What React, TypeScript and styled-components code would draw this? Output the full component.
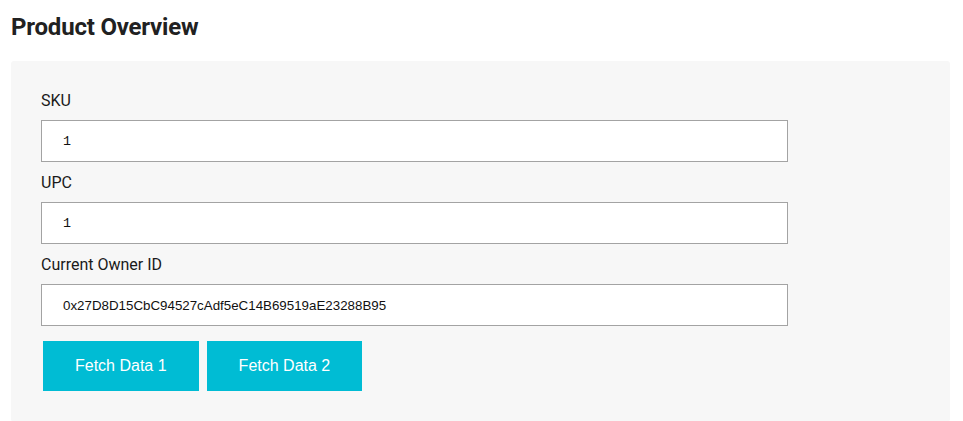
import React from "react"
import styled, { createGlobalStyle } from "styled-components"

const GlobalStyle = createGlobalStyle`
  html, body {
    margin: 0;
    padding: 0;
    background: #ffffff;
  }
  body {
    font-family: Roboto, "Liberation Sans", Arial, sans-serif;
    color: #212121;
  }
`

const Page = styled.div`
  padding: 0 13px 0 11px;
`

const Title = styled.h2`
  margin: 0;
  padding-top: 13px;
  height: 50px;
  box-sizing: border-box;
  font-family: Roboto, sans-serif;
  font-size: 24px;
  font-weight: 700;
  line-height: 28px;
  color: #212121;
  letter-spacing: -0.2px;
`

const Panel = styled.section`
  margin-top: 11px;
  background: #f7f7f7;
  border-radius: 3px;
  padding: 30px 30px 31px 30px;
  min-height: 300px;
`

const Field = styled.div`
  display: flex;
  flex-direction: column;
  align-items: flex-start;
  margin-bottom: 11px;

  &:last-of-type {
    margin-bottom: 0;
  }
`

const Label = styled.label`
  font-family: Roboto, sans-serif;
  font-size: 16px;
  line-height: 19px;
  color: #1a1a1a;
  margin-bottom: 10px;
`

const Input = styled.input<{ $mono?: boolean }>`
  box-sizing: border-box;
  width: 747px;
  height: 42px;
  border: 1px solid #a3a3a3;
  border-radius: 0;
  background: #ffffff;
  padding: 0 20px 0 21px;
  font-family: ${({ $mono }) => ($mono ? `"Liberation Mono", monospace` : `"Liberation Sans", Arial, sans-serif`)};
  font-size: 13.33px;
  color: #111111;
  outline: none;
`

const Actions = styled.div`
  display: flex;
  gap: 8px;
  margin: 15px 0 0 2px;
`

const Button = styled.button`
  height: 50px;
  padding: 0 32px;
  border: none;
  border-radius: 0;
  background: #00bcd4;
  color: #ffffff;
  font-family: "Liberation Sans", Arial, sans-serif;
  font-size: 16px;
  cursor: pointer;
`

export default function App(): JSX.Element {
  return (
    <>
      <GlobalStyle />
      <Page>
        <Title>Product Overview</Title>
        <Panel>
          <Field>
            <Label>SKU</Label>
            <Input $mono defaultValue="1" />
          </Field>
          <Field>
            <Label>UPC</Label>
            <Input $mono defaultValue="1" />
          </Field>
          <Field>
            <Label>Current Owner ID</Label>
            <Input defaultValue="0x27D8D15CbC94527cAdf5eC14B69519aE23288B95" />
          </Field>
          <Actions>
            <Button>Fetch Data 1</Button>
            <Button>Fetch Data 2</Button>
          </Actions>
        </Panel>
      </Page>
    </>
  )
}
